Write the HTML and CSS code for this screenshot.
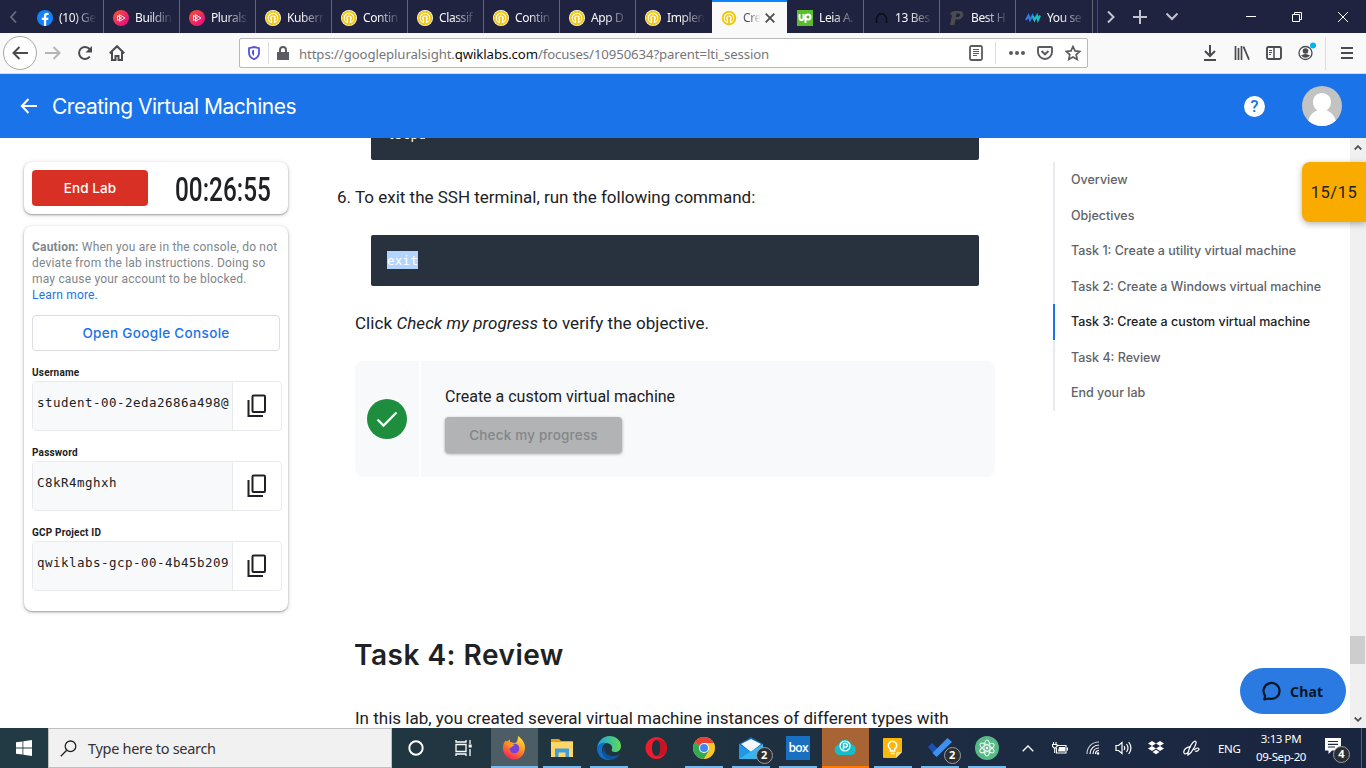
FILE: index.html
```html
<!DOCTYPE html>
<html lang="en">
<head>
<meta charset="utf-8">
<title>Creating Virtual Machines</title>
<link rel="stylesheet" href="styles.css">
</head>
<body>
<svg class="defs" width="0" height="0">
  <symbol id="qwik" viewBox="0 0 16 16"><circle cx="8" cy="8" r="8" fill="#fff"/><circle cx="8" cy="8" r="6.3" fill="none" stroke="#f2c714" stroke-width="2"/><path d="M5.7 11A3.6 3.6 0 1 1 10.300 11" fill="none" stroke="#f2c714" stroke-width="1.500"/><path d="M8 7.500v8" stroke="#f2c714" stroke-width="1.800"/><circle cx="8" cy="8" r="1.400" fill="#f2c714"/></symbol>
  <symbol id="plural" viewBox="0 0 16 16"><circle cx="8" cy="8" r="8" fill="url(#pg)"/><path d="M6.500 4.700v6.600L12 8zM4.500 5.500v5l4-2.500z" fill="none" stroke="#fff" stroke-width=".9"/></symbol>
  <symbol id="copy" viewBox="0 0 24 24"><path d="M8.500 1.500H19a1 1 0 0 1 1 1v14.500a1 1 0 0 1-1 1H8.500a1 1 0 0 1-1-1V2.500a1 1 0 0 1 1-1z" fill="none" stroke="#202124" stroke-width="2"/><path d="M3.500 6v16H18" fill="none" stroke="#202124" stroke-width="2"/></symbol>
  <linearGradient id="pg" x1="0" y1="0" x2="1" y2="1"><stop offset="0" stop-color="#f15b2a"/><stop offset="1" stop-color="#ec008c"/></linearGradient>
</svg>

<div class="tabs">
  <div class="tab-scroll"><svg width="8" height="14" viewBox="0 0 8 14"><path d="M7 1.500L2 7l5 5.500" fill="none" stroke="#6b6c80" stroke-width="1.800"/></svg></div>
  <div class="tab first"><svg width="16" height="16" viewBox="0 0 16 16"><circle cx="8" cy="8" r="8" fill="#1284f7"/><path d="M6.900 16V10H4.800V7.700h2.100V6c0-2.100 1.200-3.200 3.100-3.200l1.600.1v2h-1.100c-1 0-1.300.6-1.300 1.300v1.500h2.300L11.100 10H9.200v6z" fill="#fff"/></svg><span>(10) Ge</span></div>
  <div class="tab"><svg width="16" height="16"><use href="#plural"/></svg><span>Buildin</span></div>
  <div class="tab"><svg width="16" height="16"><use href="#plural"/></svg><span>Plurals</span></div>
  <div class="tab"><svg width="16" height="16"><use href="#qwik"/></svg><span>Kubern</span></div>
  <div class="tab"><svg width="16" height="16"><use href="#qwik"/></svg><span>Contin</span></div>
  <div class="tab"><svg width="16" height="16"><use href="#qwik"/></svg><span>Classif</span></div>
  <div class="tab"><svg width="16" height="16"><use href="#qwik"/></svg><span>Contin</span></div>
  <div class="tab"><svg width="16" height="16"><use href="#qwik"/></svg><span>App D</span></div>
  <div class="tab last-before"><svg width="16" height="16"><use href="#qwik"/></svg><span>Implen</span></div>
  <div class="tab active"><svg width="16" height="16"><use href="#qwik"/></svg><span>Cre</span><svg class="x" width="10" height="10" viewBox="0 0 10 10"><path d="M.7.7l8.600 8.600M9.300.7L.7 9.300" stroke="#4a4a4f" stroke-width="1.700"/></svg></div>
  <div class="tab"><svg width="16" height="16" viewBox="0 0 16 16"><path d="M0 0h16v16H0z" fill="#5bbc2e"/><path d="M2.500 4v4c0 2.600 4 2.600 4 0V4M8.500 13V7c0-3.300 5-3.300 5 0s-3.500 3-5 1" fill="none" stroke="#fff" stroke-width="2"/></svg><span>Leia A.</span></div>
  <div class="tab"><svg width="16" height="16" viewBox="0 0 16 16"><path d="M3.500 13V7.500l3-3.500h4l3 3.500V13" fill="none" stroke="#0b0c14" stroke-width="1.300"/></svg><span>13 Bes</span></div>
  <div class="tab"><svg width="16" height="16" viewBox="0 0 16 16"><path d="M5.500 1h5c6 0 4.500 8.500-1.500 8.500H6.500L5.300 15H1l2-10H1.500V2.500zM7.500 3.500L6.700 7H9c2.500 0 3-3.500.5-3.500z" fill="#4c4c4f"/></svg><span>Best H</span></div>
  <div class="tab you"><svg width="16" height="16" viewBox="0 0 16 16"><path d="M1 10l2.500-4.500L5 10l2.500-4.500L9 10" fill="none" stroke="#2f7cf0" stroke-width="2"/><path d="M8 6l1.500 4L12 5.500 13 10l2-4.500" fill="none" stroke="#16c3c2" stroke-width="2"/></svg><span>You se</span></div>
  <div class="tab-tools">
    <svg width="10" height="14" viewBox="0 0 10 14"><path d="M2 1.500L7.500 7 2 12.500" fill="none" stroke="#c3c3cd" stroke-width="2"/></svg>
    <svg width="14" height="14" viewBox="0 0 14 14"><path d="M7 0v14M0 7h14" stroke="#c3c3cd" stroke-width="2"/></svg>
    <svg width="14" height="9" viewBox="0 0 14 9"><path d="M1.500 1.500L7 7l5.500-5.500" fill="none" stroke="#c3c3cd" stroke-width="2"/></svg>
  </div>
  <div class="win">
    <svg width="10" height="10"><path d="M0 4.500h10" stroke="#fff"/></svg>
    <svg width="10" height="10" viewBox="0 0 10 10"><path d="M.5 2.500h7v7h-7zM2.500 2V.5h7v7H8" fill="none" stroke="#fff"/></svg>
    <svg width="10" height="10" viewBox="0 0 10 10"><path d="M0 0l10 10M10 0L0 10" stroke="#fff"/></svg>
  </div>
</div>

<div class="toolbar">
  <div class="nav">
    <div class="back"><svg width="16" height="14" viewBox="0 0 16 14"><path d="M7.500 1L1.500 7l6 6M1.500 7H16" fill="none" stroke="#4a4a4f" stroke-width="2"/></svg></div>
    <svg width="16" height="14" viewBox="0 0 16 14"><path d="M8.500 1l6 6-6 6M14.500 7H0" fill="none" stroke="#b5b5b7" stroke-width="2"/></svg>
    <svg class="reload" width="16" height="16" viewBox="0 0 16 16"><path d="M12.800 11.600A6 6 0 1 1 12.600 4" fill="none" stroke="#4a4a4f" stroke-width="2"/><path d="M15 1v6.500H8.500z" fill="#4a4a4f"/></svg>
    <svg class="home" width="16" height="16" viewBox="0 0 16 16"><path d="M.8 8.300L8 1.200l7.200 7.100M3 7v8h3.500v-4h3v4H13V7" fill="none" stroke="#4a4a4f" stroke-width="2"/></svg>
  </div>
  <div class="url">
    <svg width="12" height="14" viewBox="0 0 12 14"><path d="M6 1l5 1.200v4.500C11 10 9 12 6 13.200 3 12 1 10 1 6.700V2.200z" fill="none" stroke="#5751df" stroke-width="1.800"/><path d="M6 4v6C4.600 9 4 8 4 6.500V4.400z" fill="#4b50d8"/></svg>
    <i class="bar"></i>
    <svg width="12" height="14" viewBox="0 0 12 14"><path d="M0 6h12v8H0z" fill="#5b5b60"/><path d="M3 6.500V4a3 3 0 0 1 6 0v2.500" fill="none" stroke="#5b5b60" stroke-width="2"/></svg>
    <span class="addr">https://googlepluralsight.<b>qwiklabs.com</b>/focuses/10950634?parent=lti_session</span>
    <svg class="reader" width="14" height="16" viewBox="0 0 14 16"><rect x="1" y="1" width="12" height="14" rx="1.500" fill="none" stroke="#5b5b60" stroke-width="1.800"/><path d="M4 4.500h6M4 6.500h6M4 8.500h6M4 10.500h4" stroke="#5b5b60"/></svg>
    <i class="bar"></i>
    <svg class="dots" width="16" height="4"><circle cx="2" cy="2" r="2"/><circle cx="8" cy="2" r="2"/><circle cx="14" cy="2" r="2"/></svg>
    <svg class="pocket" width="16" height="14" viewBox="0 0 16 14"><path d="M2 1h12a1 1 0 0 1 1 1v4a7 7 0 0 1-14 0V2a1 1 0 0 1 1-1z" fill="none" stroke="#5b5b60" stroke-width="1.900"/><path d="M4.500 5L8 8.300 11.500 5" fill="none" stroke="#5b5b60" stroke-width="2"/></svg>
    <svg width="16" height="16" viewBox="0 0 16 16"><path d="M8 1.500l2 4.400 4.800.5-3.600 3.200 1 4.800L8 12l-4.200 2.400 1-4.800L1.200 6.400 6 5.900z" fill="none" stroke="#5b5b60" stroke-width="1.700"/></svg>
  </div>
  <div class="tools">
    <svg width="14" height="16" viewBox="0 0 14 16"><path d="M7 0v11M2 6l5 5 5-5M1 15h12" fill="none" stroke="#4a4a4f" stroke-width="2"/></svg>
    <svg width="16" height="14" viewBox="0 0 16 14"><path d="M1.500 0v14M4.500 2v12M7.500 0v14M9.500.7l5.500 13" fill="none" stroke="#4a4a4f" stroke-width="1.700"/></svg>
    <svg width="16" height="14" viewBox="0 0 16 14"><rect x="1" y="1" width="14" height="12" rx="1.500" fill="none" stroke="#4a4a4f" stroke-width="1.900"/><path d="M8 1v12" stroke="#4a4a4f" stroke-width="1.500"/><path d="M3 4.500h3M3 6.500h3M3 8.500h2" stroke="#4a4a4f"/></svg>
    <svg class="acct" width="18" height="20" viewBox="0 0 18 20"><circle cx="7.500" cy="12" r="6.500" fill="none" stroke="#4a4a4f" stroke-width="1.300"/><circle cx="7.500" cy="10" r="2.800" fill="#4a4a4f"/><path d="M3 14.500q4.500-3 9 0-4.500 4.500-9 0z" fill="#4a4a4f"/><circle cx="15" cy="4.500" r="3" fill="#00b3f4"/></svg>
    <i class="bar"></i>
    <svg class="menu" width="12" height="12" viewBox="0 0 12 12"><path d="M0 1h12M0 6h12M0 11h12" stroke="#4a4a4f" stroke-width="2"/></svg>
  </div>
</div>

<header class="head">
  <svg width="18" height="16" viewBox="0 0 18 16"><path d="M8.500 1L1.800 8l6.700 7M1.800 8H17" fill="none" stroke="#fff" stroke-width="2"/></svg>
  <h1>Creating Virtual Machines</h1>
  <div class="help">?</div>
  <svg class="avatar" width="40" height="40" viewBox="0 0 40 40"><clipPath id="av"><circle cx="20" cy="20" r="20"/></clipPath><g clip-path="url(#av)"><path d="M0 0h40v40H0z" fill="#c3c3c3"/><path d="M20 7c-5 0-9 3.500-9 9 0 4 2 7 4.500 8.500C9.500 26.500 6 31 5.500 40h29c-.5-9-4-13.500-10-15.500C27 23 29 20 29 16c0-5.500-4-9-9-9z" fill="#fff"/></g></svg>
</header>

<div class="page">
  <aside class="side">
    <div class="card timer-card">
      <button class="end">End Lab</button>
      <div class="timer"><span>00:26:55</span></div>
    </div>
    <div class="card info">
      <p class="caution"><b>Caution:</b> When you are in the console, do not<br>deviate from the lab instructions. Doing so<br>may cause your account to be blocked.<br><a>Learn more.</a></p>
      <button class="console">Open Google Console</button>
      <label>Username</label>
      <div class="field"><div class="val">student-00-2eda2686a498@</div><div class="cp"><svg width="24" height="24"><use href="#copy"/></svg></div></div>
      <label>Password</label>
      <div class="field"><div class="val">C8kR4mghxh</div><div class="cp"><svg width="24" height="24"><use href="#copy"/></svg></div></div>
      <label>GCP Project ID</label>
      <div class="field"><div class="val">qwiklabs-gcp-00-4b45b209</div><div class="cp"><svg width="24" height="24"><use href="#copy"/></svg></div></div>
    </div>
  </aside>

  <main class="content">
    <pre class="code cut">lscpu</pre>
    <div class="step"><span class="num">6.</span><span class="t-step">To exit the SSH terminal, run the following command:</span></div>
    <pre class="code"><span class="sel">exit</span></pre>
    <p class="click">Click <em>Check my progress</em> to verify the objective.</p>
    <div class="progress">
      <div class="state"><svg width="40" height="40" viewBox="0 0 40 40"><circle cx="20" cy="20" r="20" fill="#1e8e3e"/><path d="M10.500 20.500l6 6L29.500 13.500" fill="none" stroke="#fff" stroke-width="2.300"/></svg></div>
      <div class="body"><div class="ptitle">Create a custom virtual machine</div><button class="check">Check my progress</button></div>
    </div>
    <h2>Task 4: Review</h2>
    <p class="last">In this lab, you created several virtual machine instances of different types with</p>
  </main>

  <nav class="toc">
    <a>Overview</a>
    <a>Objectives</a>
    <a>Task 1: Create a utility virtual machine</a>
    <a>Task 2: Create a Windows virtual machine</a>
    <a class="on">Task 3: Create a custom virtual machine</a>
    <a>Task 4: Review</a>
    <a>End your lab</a>
  </nav>

  <div class="scroll">
    <svg width="8" height="5" viewBox="0 0 8 5"><path d="M.7 4.500L4 1.200l3.300 3.300" fill="none" stroke="#505050" stroke-width="1.800"/></svg>
    <div class="thumb"></div>
    <svg width="8" height="5" viewBox="0 0 8 5"><path d="M.7.500L4 3.800 7.300.500" fill="none" stroke="#505050" stroke-width="1.800"/></svg>
  </div>
  <div class="score">15/15</div>
  <div class="chat"><svg width="20" height="20" viewBox="0 0 20 20"><path d="M2.300 18.300l.9-3.500A8 8 0 1 1 7 17.500z" fill="none" stroke="#0b1626" stroke-width="2.200" stroke-linejoin="round"/></svg><span>Chat</span></div>
</div>

<footer class="task">
  <div class="start"><svg width="16" height="16" viewBox="0 0 16 16"><path d="M0 2.300L6.500 1.400v6.200H0zM7.300 1.300L16 0v7.600H7.300zM0 8.400h6.500v6.200L0 13.700zM7.300 8.400H16V16l-8.700-1.300z" fill="#fff"/></svg></div>
  <div class="search"><svg width="17" height="17" viewBox="0 0 17 17"><circle cx="10.500" cy="6.300" r="5.300" fill="none" stroke="#222" stroke-width="1.300"/><path d="M6.700 10.200L.8 16.200" stroke="#222" stroke-width="1.300"/></svg><span>Type here to search</span></div>
  <div class="sys"><svg width="16" height="16"><circle cx="8" cy="8" r="6.700" fill="none" stroke="#fff" stroke-width="2"/></svg></div>
  <div class="sys"><svg width="18" height="16" viewBox="0 0 18 16"><path d="M1 4.500h10v7H1zM1 0v2h10V0M1 16v-2h10v2M15 0v4M15 9v7" fill="none" stroke="#fff" stroke-width="1.300"/><path d="M13.700 4.500h3v3h-3z" fill="#fff"/></svg></div>
  <div class="apps">
    <div class="app ff"><svg width="24" height="24" viewBox="0 0 24 24"><defs><linearGradient id="f" x1=".8" y1="0" x2=".3" y2="1"><stop offset="0" stop-color="#ffe847"/><stop offset=".5" stop-color="#ff8a24"/><stop offset="1" stop-color="#f5205c"/></linearGradient></defs><path d="M16 0c4 3 7.500 7 7 12.500C22 20 17.500 23.500 12 23.500S1 19 1 12.500C1 9 2 6 3.500 4.500c.5.500 1 1 1.500 1L8 3.500v2.500C9.500 6 11 7 12.500 7c2.500 0 3.500-3 3.500-7z" fill="url(#f)"/><circle cx="12.500" cy="12.500" r="4.800" fill="#7542d8"/><path d="M5 8.500c2-2 6-1 8 1-3 0-3 2.500-6 2.500" fill="#ff9720"/></svg></div>
    <div class="app run"><svg width="22" height="20" viewBox="0 0 22 20"><path d="M0 1h8l2 2h12v6H0z" fill="#e5a50a"/><path d="M0 4h22v15H0z" fill="#ffd667"/><path d="M4 19v-8.500h14V19h-3.500v-4.500h-7V19z" fill="#3e9ddd"/></svg></div>
    <div class="app run"><svg width="24" height="24" viewBox="0 0 24 24"><defs><linearGradient id="e1"><stop offset="0" stop-color="#1ba5df"/><stop offset="1" stop-color="#62d85a"/></linearGradient></defs><path d="M0 12C1 5 6 0 12.500 0 19 0 24 4.500 24 10c0 4-3 6-6 6s-4-1-3-3c1-4-3-6-6-6-4 0-8 2-9 5z" fill="url(#e1)"/><path d="M0 12c1-4 5-6 9-5-4 2-5 7-3 11 2 4 6 5 10 4-2 1.500-3 2-5 2C5 24 0 19 0 12z" fill="#0f6fc9"/><path d="M9 9c-3 3-2 8 2 10 4 2 9 1 12-1-3 5-9 7-13 5-4-1-6-9-1-14z" fill="#10549e"/></svg></div>
    <div class="app"><svg width="23" height="24" viewBox="0 0 23 24"><path d="M11.500 1C17.500 1 22 6 22 12s-4.500 11-10.500 11S.5 18 .5 12 5.500 1 11.500 1zm0 3C8.500 4 7 8 7 12s1.500 8 4.500 8 4-4 4-8-1-8-4-8z" fill="#ed1c2e"/><path d="M11.500 4c3 0 4 4 4 8s-1 8-4 8c5 2 10.500-2 10.500-8S16.500 2 11.500 4z" fill="#c91322"/></svg></div>
    <div class="app run chrome"><svg width="22" height="22" viewBox="0 0 22 22"><circle cx="11" cy="11" r="11" fill="#fbc52c"/><path d="M11 11L1.500 5.500A11 11 0 0 1 20.500 5.500z" fill="#e94235"/><path d="M1.500 5.500A11 11 0 0 0 11 22l5-8.500L11 11z" fill="#34a853"/><path d="M11 6h10q1.500 6-2 10.500T11 22l5-8.500z" fill="#fbc52c"/><circle cx="11" cy="11" r="5" fill="#fff"/><circle cx="11" cy="11" r="4" fill="#4285f4"/></svg></div>
    <div class="app run"><svg width="24" height="22" viewBox="0 0 24 22"><path d="M12 0l12 7v15H0V7z" fill="#1267b4"/><path d="M2 7l10-5 10 5-10 8z" fill="#f4f8fb"/><path d="M0 7l12 8 12-8v15H0z" fill="#2098e6"/><path d="M0 22L24 7v15z" fill="#37b5ee"/></svg><em class="badge">2</em></div>
    <div class="app run"><div class="box">box</div></div>
    <div class="app cloud"><svg width="24" height="18" viewBox="0 0 24 18"><path d="M5.500 17a5.500 5.500 0 0 1 0-10.500 7 7 0 0 1 13.300 0A5.500 5.500 0 0 1 19 17z" fill="#18bcc8"/><circle cx="12" cy="8" r="5" fill="none" stroke="#fff" stroke-width="1.200"/><path d="M10.500 11.500V5.500h2a1.800 1.800 0 0 1 0 3.600h-2" fill="none" stroke="#fff" stroke-width="1.400"/></svg></div>
    <div class="app run"><svg width="19" height="20" viewBox="0 0 19 20"><path d="M1 0h17a1 1 0 0 1 1 1v13l-6 6H1a1 1 0 0 1-1-1V1a1 1 0 0 1 1-1z" fill="#fbb808"/><path d="M19 14h-6v6z" fill="#ffdf75"/><path d="M7.300 13v-2A4.200 4.200 0 1 1 11.700 11v2zM7.500 15.500h4" fill="none" stroke="#fff" stroke-width="1.500"/></svg></div>
    <div class="app run todo"><svg width="24" height="20" viewBox="0 0 24 20"><path d="M0 9l4-4 9 9-4.500 5z" fill="#1952b5"/><path d="M8.500 19l-4-4L19.500 0l4.500 4z" fill="#4090ef"/></svg><em class="badge">2</em></div>
    <div class="app run"><svg width="24" height="24" viewBox="0 0 24 24"><circle cx="12" cy="12" r="12" fill="#57b985"/><g fill="none" stroke="#e3f5eb" stroke-width="1.100"><ellipse cx="12" cy="12" rx="3" ry="8"/><ellipse cx="12" cy="12" rx="3" ry="8" transform="rotate(62 12 12)"/><ellipse cx="12" cy="12" rx="3" ry="8" transform="rotate(-60 12 12)"/></g><circle cx="12" cy="12" r="1.300" fill="#fff"/></svg></div>
  </div>
  <div class="tray">
    <svg width="12" height="7" viewBox="0 0 12 7"><path d="M.7 6.300L6 1l5.300 5.300" fill="none" stroke="#fff" stroke-width="1.300"/></svg>
    <svg class="batt" width="16" height="12" viewBox="0 0 16 12"><path d="M5.500 3.500H14v7.500H4.500V6M15.500 5.500v3M1.500 0v2.500M4 0v2.500M.5 2.500h4.500v2L3.500 6H2L.5 4.500zM2.700 6v5" fill="none" stroke="#fff" stroke-width="1.100"/><path d="M7 5h6v4.500H6z" fill="#fff"/></svg>
    <svg class="wifi" width="14" height="14" viewBox="0 0 14 14"><g fill="none" stroke="#fff" stroke-width="1.200"><path d="M1 13C1 6 6 1 13 1" opacity=".75"/><path d="M4 13c0-5 4-9 9-9M7 13c0-3.500 2.500-6 6-6M9.500 13c0-2 1.500-3.500 3.500-3.500"/></g><circle cx="12" cy="12.500" r="1.300" fill="#fff"/></svg>
    <svg class="vol" width="17" height="14" viewBox="0 0 17 14"><path d="M1 4.500h2.500L7 1.500v11L3.500 9.500H1zM9 5q1.500 2 0 4M11.500 3q3 4 0 8M13.700 1q4.500 6 0 12" fill="none" stroke="#fff" stroke-width="1.200"/></svg>
    <svg class="drop" width="16" height="14" viewBox="0 0 16 14"><path d="M4 0l4 2.500L4 5 0 2.500zM12 0l4 2.500L12 5 8 2.500zM4 5l4 2.500L4 10 0 7.500zM12 5l4 2.500-4 2.500-4-2.500zM4.500 11L8 8.800l3.500 2.200L8 13.300z" fill="#fff"/></svg>
    <svg class="pen" width="17" height="16" viewBox="0 0 17 16"><path d="M5 13c1-5 4-11 7-12 2 .5 1 3-.5 6L8 12.500 5 15zM8 7c-4-1-8 3-7 6 1 2 4 0 5-2M11 10c3-3 5-2 5-1s-2 3-4 2" fill="none" stroke="#fff" stroke-width="1.200"/></svg>
    <span class="lang">ENG</span>
    <div class="clock"><span class="time">3:13 PM</span><span class="date">09-Sep-20</span></div>
    <div class="note"><svg width="16" height="16" viewBox="0 0 16 16"><path d="M0 0h16v12.500H7L3.500 16v-3.500H0z" fill="#fff"/><path d="M3 3.500h10M3 6.300h10M3 9h7" stroke="#1c2b40" stroke-width="1.200"/></svg><em class="badge">4</em></div>
    <i class="peek"></i>
  </div>
</footer>
</body>
</html>
```
FILE: styles.css
```css
* { box-sizing: border-box; }
body { margin: 0; width: 1366px; height: 768px; overflow: hidden; display: flex; flex-direction: column; background: #fff; font-family: Roboto, "Liberation Sans", sans-serif; color: #202124; }
svg { display: block; flex: none; }
.defs { position: absolute; }
p, h1, h2, pre { margin: 0; font-weight: 400; white-space: nowrap; }
button { border: 0; padding: 0; font-family: Inter, sans-serif; }

.tabs { height: 33px; flex: none; display: flex; background: #20233f; color: #f9f9fa; font: 12px "Noto Sans", sans-serif; letter-spacing: -.4px; }
.tab-scroll { width: 28px; display: flex; align-items: center; padding-left: 9px; }
.tab { width: 76px; flex: none; display: flex; align-items: center; padding: 2px 0 0 9px; gap: 6px; border-right: 1px solid #636476; overflow: hidden; }
.tab span { width: 39px; white-space: nowrap; -webkit-mask-image: linear-gradient(90deg, #000 35%, transparent 97%); mask-image: linear-gradient(90deg, #000 35%, transparent 97%); }
.tab.last-before { border-right: 0; }
.tab.active { background: #f9f9fa; color: #55555b; border-right: 0; border-top: 2px solid #0a84ff; padding-top: 0; width: 75px; margin-right: 1px; }
.tab.active span { width: 18px; }
.tab.active .x { margin-left: -2px; }
.tab.you { width: 77px; }
.tab-tools { border-left: 1px solid #4a4c64; margin-left: 4px; display: flex; align-items: center; padding-left: 8px; gap: 17px; width: 90px; }
.tab-tools svg:nth-child(3) { margin-left: 1px; }
.win { display: flex; align-items: center; gap: 36px; margin-left: auto; padding-right: 18px; }

.toolbar { height: 41px; flex: none; display: flex; align-items: center; background: #f9f9fa; border-bottom: 1px solid #dcdcde; }
.nav { display: flex; align-items: center; width: 239px; flex: none; padding-left: 3px; }
.back { width: 34px; height: 34px; border: 1px solid #a9a9ab; border-radius: 50%; background: #fff; display: flex; align-items: center; justify-content: center; margin-right: 8px; }
.reload { margin-left: 16px; }
.home { margin-left: 16px; }
.url { width: 849px; flex: none; height: 30px; display: flex; align-items: center; border: 1px solid #b9b9bc; border-radius: 2px; background: #fff; padding: 0 6px 0 8px; }
.bar { width: 1px; height: 22px; background: #dcdcde; }
.url .bar { margin: 0 8px; }
.addr { margin-left: 10px; padding-top: 1px; flex: 1; white-space: nowrap; font: 13.2px "Noto Sans", sans-serif; color: #76767a; letter-spacing: -.1px; }
.addr b { font-weight: 400; color: #0c0c0d; }
.url .reader { margin-right: 4px; }
.url .dots { fill: #5b5b60; margin: 0 12px 0 5px; }
.pocket { margin-right: 12px; }
.tools { display: flex; align-items: center; flex: none; margin-left: 115px; }
.tools svg { margin-right: 17px; }
.tools svg:nth-child(2) { margin-right: 16px; }
.tools svg:nth-child(3) { margin-right: 16px; }
.tools .acct { margin: -5px 9px 0 0; }
.tools .bar { height: 33px; margin-right: 15px; }
.tools .menu { margin-right: 0; }

.head { height: 64px; flex: none; background: #1a73e8; color: #fff; display: flex; align-items: center; padding: 0 24px 0 20px; }
.head h1 { margin-left: 14px; font: 400 21px Inter, sans-serif; letter-spacing: -.48px; }
.help { margin-left: auto; width: 21px; height: 21px; border-radius: 50%; background: #fff; color: #1a73e8; font: 500 17px/21px Roboto, sans-serif; text-align: center; }
.avatar { margin-left: 37px; }

.page { position: relative; height: 590px; flex: none; display: flex; overflow: hidden; }
.side { width: 288px; padding: 24px 0 0 24px; flex: none; }
.card { width: 264px; border-radius: 8px; background: #fff; box-shadow: 0 1px 2px rgba(60,64,67,.45), 0 1px 4px 1px rgba(60,64,67,.13); }
.timer-card { height: 52px; display: flex; padding: 8px; margin-bottom: 12px; }
.end { width: 116px; height: 36px; border-radius: 4px; background: #d93025; color: #fff; font-size: 13.500px; font-weight: 500; letter-spacing: .1px; }
.timer { width: 96px; margin-left: 27px; height: 38px; }
.timer span { display: block; width: 130px; font-size: 33px; font-weight: 500; line-height: 39px; transform: scaleX(.738); transform-origin: 0 0; white-space: nowrap; }
.info { height: 385px; padding: 13px 0 0 8px; }
.caution { font-size: 12px; line-height: 16px; color: #80868b; letter-spacing: .19px; }
.caution a { color: #1a73e8; }
.console { display: block; width: 248px; height: 36px; margin: 12px 0 16px; border: 1px solid #dadce0; border-radius: 4px; background: #fff; color: #1a73e8; font-size: 13.500px; font-weight: 500; letter-spacing: .33px; }
label { display: block; font-size: 10px; line-height: 12px; height: 14px; font-weight: 700; letter-spacing: .2px; }
.field { width: 250px; height: 50px; display: flex; border: 1px solid #e8eaed; border-radius: 4px; margin-bottom: 16px; }
.val { width: 200px; padding: 12px 0 0 4px; background: #f8f9fa; border-right: 1px solid #e8eaed; font: 12.5px/18px "DejaVu Sans Mono", monospace; letter-spacing: .475px; white-space: nowrap; overflow: hidden; }
.cp { flex: 1; display: flex; align-items: center; justify-content: center; }

.content { width: 765px; padding-left: 67px; flex: none; }
.code { width: 608px; height: 51px; margin-left: 16px; border-radius: 2px; background: #28323e; color: #fff; padding: 16px; font: 12.5px/18px "DejaVu Sans Mono", monospace; letter-spacing: .275px; }
.code.cut { margin-top: -29px; padding-top: 17px; }
.sel { display: inline-block; height: 18px; line-height: 19px; background: #b3d4fc; }
.step { margin: 24px 0 25px -18px; height: 26px; display: flex; font-size: 17px; line-height: 26px; white-space: nowrap; }
.num { width: 18px; }
.click { margin-top: 24px; font-size: 17px; line-height: 26px; letter-spacing: .06px; }
.progress { width: 640px; height: 116px; margin-top: 25px; display: flex; gap: 2px; }
.state { width: 64px; background: #f8f9fb; border-radius: 8px 0 0 8px; display: flex; align-items: center; justify-content: center; }
.body { flex: 1; background: #f8f9fb; border-radius: 0 8px 8px 0; padding: 25px 24px 0; }
.ptitle { font-size: 16px; line-height: 22px; margin-bottom: 9px; }
.check { display: block; width: 177px; height: 36px; background: #b1b3b5; color: #83868a; border-radius: 4px; box-shadow: 0 1px 3px rgba(60,64,67,.5); font-size: 13.500px; font-weight: 500; letter-spacing: .2px; }
h2 { margin-top: 160px; margin-left: -1px; height: 36px; font: 600 28px/36px Inter, sans-serif; letter-spacing: .5px; }
.last { margin-top: 32px; font-size: 17px; line-height: 26px; }

.toc { margin-top: 24px; width: 297px; height: 248.5px; display: flex; flex-direction: column; background: linear-gradient(90deg, #e8eaed 2px, transparent 2px); }
.toc a { flex: 1; display: flex; align-items: center; padding-left: 16px; border-left: 2px solid transparent; font: 500 12.5px Inter, sans-serif; color: #5f6368; white-space: nowrap; }
.toc a.on { color: #202124; border-left-color: #1a73e8; }

.scroll { width: 16px; background: #f0f0f0; display: flex; flex-direction: column; align-items: center; padding: 7px 0 6px; }
.thumb { width: 15px; height: 28px; background: #cdcdcd; margin: 486px 1px auto 0; }
.score { position: absolute; right: 0; top: 24px; width: 64px; height: 60px; border-radius: 8px 0 0 8px; background: #f9ab00; box-shadow: 0 2px 6px rgba(0,0,0,.3); font-size: 16.500px; line-height: 61px; text-align: center; letter-spacing: .5px; }
.chat { position: absolute; left: 1240px; top: 530px; width: 106px; height: 46px; border-radius: 23px; background: #2a7ae2; color: #0b1626; display: flex; align-items: center; padding-left: 22px; gap: 8px; font: 700 14px "Noto Sans", sans-serif; letter-spacing: .15px; }

.task { height: 40px; flex: none; display: flex; background: linear-gradient(90deg, #213a43 0%, #20343f 45%, #1c2a42 75%, #1a2540 100%); color: #fff; font-family: "Noto Sans", sans-serif; }
.start { width: 48px; display: flex; align-items: center; justify-content: center; }
.search { width: 344px; display: flex; align-items: center; gap: 11px; background: #f1f1f1; border: 1px solid #bfbfbf; padding-left: 11px; color: #333; font-size: 14.500px; letter-spacing: -.3px; }
.sys { width: 48px; display: flex; align-items: center; justify-content: center; }
.apps { display: flex; margin-left: 3px; width: 520px; }
.app { position: relative; flex: 1; display: flex; align-items: center; justify-content: center; }
.app.ff { background: #4c5d66; border-bottom: 2px solid #76b9ed; }
.app.ff svg { margin: 1px 1px 0 0; }
.app.run { background: linear-gradient(#76b9ed, #76b9ed) 50% 100% / 38px 2px no-repeat; }
.app.cloud { background: #a86434; border-bottom: 2px solid #ff7800; }
.badge { position: absolute; right: 2px; bottom: 4px; width: 17px; height: 17px; border-radius: 50%; background: #2b2f33; border: 1px solid #9a9ea2; font: 700 11px/14px "Noto Sans", sans-serif; text-align: center; }
.box { width: 24px; height: 24px; background: #1a70c0; font: 600 12px/23px "Open Sans", sans-serif; text-align: center; letter-spacing: -.6px; }
.todo .badge { right: 3px; }
.tray { flex: 1; display: flex; align-items: center; padding-left: 11px; }
.batt { margin-left: 18px; }
.wifi { margin-left: 18px; }
.vol { margin-left: 15px; }
.drop { margin-left: 16px; }
.pen { margin-left: 19px; }
.lang { margin-left: 18px; width: 24px; font-size: 11.500px; letter-spacing: -.3px; }
.clock { margin-left: 10px; width: 58px; display: flex; flex-direction: column; align-items: center; font-size: 11.500px; line-height: 18px; letter-spacing: -.4px; white-space: nowrap; padding-bottom: 1px; }
.note { position: relative; margin-left: 15px; width: 24px; height: 20px; flex: none; }
.note .badge { right: -1px; bottom: -5px; }
.peek { margin-left: auto; margin-right: 4px; width: 1px; height: 40px; background: #566070; }
```
